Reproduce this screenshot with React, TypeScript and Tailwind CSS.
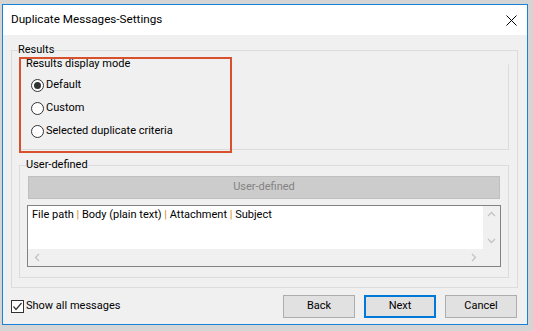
import type { ReactNode } from "react";

function GroupBox({
  label,
  className,
  children,
}: {
  label: string;
  className: string;
  children: ReactNode;
}) {
  return (
    <div className={`relative border border-[#dcdcdc] ${className}`}>
      <span className="absolute left-[6px] top-[-8px] bg-[#f0f0f0] leading-[14px]">
        {label}
      </span>
      {children}
    </div>
  );
}

function Radio({ checked, label }: { checked?: boolean; label: string }) {
  return (
    <div className="flex h-[22px] items-center">
      <span className="flex h-[13px] w-[13px] items-center justify-center rounded-full border border-[#333] bg-white">
        {checked && <span className="h-[7px] w-[7px] rounded-full bg-[#333]" />}
      </span>
      <span className="ml-[2px]">{label}</span>
    </div>
  );
}

function Chevron({ dir }: { dir: "up" | "down" | "left" | "right" }) {
  const d = {
    up: "M1 6 L4.5 2.5 L8 6",
    down: "M1 3 L4.5 6.5 L8 3",
    left: "M6 1 L2.5 4.5 L6 8",
    right: "M3 1 L6.5 4.5 L3 8",
  }[dir];
  return (
    <svg width="9" height="9" viewBox="0 0 9 9">
      <path d={d} fill="none" stroke="#c2c2c2" strokeWidth="1.3" />
    </svg>
  );
}

function Button({ label, primary }: { label: string; primary?: boolean }) {
  return (
    <button
      className={`flex h-[23px] w-[72px] items-center justify-center bg-[#e1e1e1] ${
        primary ? "border-2 border-[#0078d7]" : "border border-[#adadad]"
      }`}
    >
      {label}
    </button>
  );
}

const Sep = () => <span className="text-[#d4891e]">|</span>;

export default function App() {
  return (
    <div className="h-[331px] w-[533px] overflow-hidden bg-[#d5d5d5] pl-[2px] pt-[4px] font-['Roboto',sans-serif] text-[11px] text-black">
      <div className="flex h-[321px] w-[526px] flex-col border border-[#1a82d6] bg-[#f0f0f0]">
        {/* title bar */}
        <div className="flex h-[30px] items-center justify-between bg-white pl-[8px] pr-[10px]">
          <span className="text-[11.7px]">Duplicate Messages-Settings</span>
          <svg width="11" height="11" viewBox="0 0 11 11">
            <path d="M0.5 0.5 L10.5 10.5 M10.5 0.5 L0.5 10.5" stroke="#000" strokeWidth="1" />
          </svg>
        </div>

        <div className="flex flex-1 flex-col px-[8px]">
          <GroupBox label="Results" className="mt-[15px] h-[238px] w-[507px]">
            <div className="flex flex-col pl-[7px] pt-[13px]">
              <GroupBox
                label="Results display mode"
                className="h-[86px] w-[490px] border-t-transparent"
              >
                <div className="flex flex-col gap-[1px] pl-[11px] pt-[9px]">
                  <Radio checked label="Default" />
                  <Radio label="Custom" />
                  <Radio label="Selected duplicate criteria" />
                </div>
              </GroupBox>

              <GroupBox label="User-defined" className="mt-[15px] h-[113px] w-[490px]">
                <div className="flex flex-col">
                  <div className="ml-[8px] mt-[10px] flex h-[23px] w-[472px] items-center justify-center border border-[#bfbfbf] bg-[#cccccc] text-[#838383]">
                    User-defined
                  </div>
                  <div className="ml-[7px] mt-[6px] flex h-[62px] w-[474px] flex-col border border-[#828282]">
                    <div className="flex h-[43px]">
                      <div className="flex-1 bg-white pl-[4px] pt-[2px] leading-[14px]">
                        File path <Sep /> Body (plain text) <Sep /> Attachment <Sep /> Subject
                      </div>
                      <div className="flex w-[17px] flex-col items-center justify-between bg-[#f0f0f0] py-[4px]">
                        <Chevron dir="up" />
                        <Chevron dir="down" />
                      </div>
                    </div>
                    <div className="flex h-[17px]">
                      <div className="flex flex-1 items-center justify-between bg-[#f0f0f0] px-[5px]">
                        <Chevron dir="left" />
                        <Chevron dir="right" />
                      </div>
                      <div className="w-[17px] bg-[#f0f0f0]" />
                    </div>
                  </div>
                </div>
              </GroupBox>
            </div>

            {/* annotation highlight */}
            <div className="absolute left-[7px] top-[6px] h-[96px] w-[213px] border-2 border-[#d9502c]" />
          </GroupBox>

          <div className="mt-[7px] flex h-[23px] items-center">
            <span className="flex h-[13px] w-[13px] items-center justify-center border border-[#333] bg-white">
              <svg width="11" height="11" viewBox="0 0 11 11">
                <path d="M1.5 5.5 L4 8.5 L9.5 2" fill="none" stroke="#333" strokeWidth="1.2" />
              </svg>
            </span>
            <span className="ml-[2px]">Show all messages</span>
            <div className="ml-auto mr-[2px] flex gap-[9px]">
              <Button label="Back" />
              <Button label="Next" primary />
              <Button label="Cancel" />
            </div>
          </div>
        </div>
      </div>
    </div>
  );
}
